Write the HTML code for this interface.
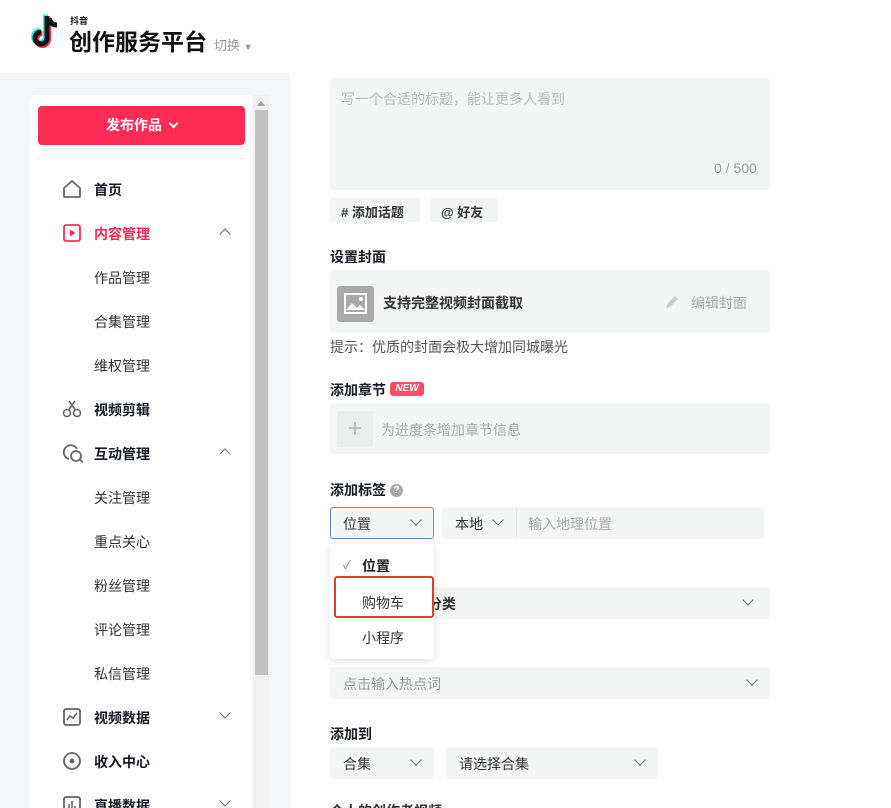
<!DOCTYPE html>
<html style="width:891px;height:808px;overflow:hidden"><head><meta charset="utf-8">
<style>
*{margin:0;padding:0;box-sizing:border-box}
body{width:891px;height:808px;overflow:hidden;background:#f5f6f7;font-family:"Liberation Sans","Noto Sans CJK SC",sans-serif;color:#161823;position:relative;font-size:14px}
.a{position:absolute}
.hdr{left:0;top:0;width:891px;height:73px;background:#fff}
.side{left:30px;top:95px;width:223px;height:713px;background:#fff;border-radius:6px 6px 0 0}
.main{left:290px;top:73px;width:601px;height:735px;background:#fff}
.nav{position:absolute;left:94px;font-size:14px;color:#333}
.nav.b{font-weight:bold;color:#161823}
.ic{position:absolute;left:62px}
.box{position:absolute;background:#f4f5f5;border-radius:4px}
.lbl{position:absolute;left:330px;font-weight:bold;font-size:14px;color:#161823}
.chev{position:absolute;width:8px;height:8px;border-right:1.6px solid #666;border-bottom:1.6px solid #666;transform:rotate(45deg)}
.chevu{position:absolute;width:8px;height:8px;border-left:1.6px solid #666;border-top:1.6px solid #666;transform:rotate(45deg)}
</style></head><body>
<div class="a hdr"></div>
<svg class="a" style="left:30px;top:13px" width="34" height="38" viewBox="0 0 34 38">
<path d="M17 3v22a6 6 0 1 1-6-6" fill="none" stroke="#25f4ee" stroke-width="5" transform="translate(-1.5,-1.5)"/>
<path d="M17 3v22a6 6 0 1 1-6-6" fill="none" stroke="#fe2c55" stroke-width="5" transform="translate(1.5,1.5)"/>
<path d="M17 3v22a6 6 0 1 1-6-6" fill="none" stroke="#111" stroke-width="5"/>
<path d="M19 5c1 5 4 7 8 7" fill="none" stroke="#111" stroke-width="5"/>
</svg>
<div class="a" style="left:70px;top:14px;font-size:9px;font-weight:bold">抖音</div>
<div class="a" style="left:69px;top:23px;font-size:23px;font-weight:bold;color:#111">创作服务平台</div>
<div class="a" style="left:214px;top:35px;font-size:13px;color:#999">切换 <span style="font-size:9px">▼</span></div>

<div class="a side"></div>
<div class="a" style="left:253px;top:95px;width:16px;height:713px;background:#f1f1f1"></div>
<div class="a" style="left:257px;top:101px;width:0;height:0;border-left:4px solid transparent;border-right:4px solid transparent;border-bottom:5px solid #a3a3a3"></div>
<div class="a" style="left:255px;top:110px;width:13px;height:565px;background:#c1c1c1"></div>

<div class="a" style="left:38px;top:106px;width:207px;height:39px;background:#fe2c55;border-radius:4px;color:#fff;font-weight:bold;font-size:14px;text-align:center;line-height:39px">发布作品 <span style="display:inline-block;width:7px;height:7px;border-right:2px solid #fff;border-bottom:2px solid #fff;transform:rotate(45deg);margin-left:4px;position:relative;top:-3px"></span></div>
<div class="a" style="left:38px;top:158px;width:207px;height:1px;background:#eee"></div>

<svg class="ic" style="top:179px" width="20" height="20" viewBox="0 0 20 20"><path d="M2 9L10 2l8 7v9H2z" fill="none" stroke="#666" stroke-width="1.8" stroke-linejoin="round"/></svg>
<div class="nav b" style="top:180px">首页</div>
<svg class="ic" style="top:223px" width="20" height="20" viewBox="0 0 20 20"><rect x="2" y="2" width="16" height="16" rx="2" fill="none" stroke="#fe2c55" stroke-width="1.8"/><path d="M8 6.5v7l5.5-3.5z" fill="#fe2c55"/></svg>
<div class="nav b" style="top:224px;color:#fe2c55">内容管理</div>
<div class="chevu" style="left:221px;top:230px"></div>
<div class="nav" style="top:268px">作品管理</div>
<div class="nav" style="top:312px">合集管理</div>
<div class="nav" style="top:356px">维权管理</div>
<svg class="ic" style="top:399px" width="20" height="20" viewBox="0 0 20 20"><circle cx="5" cy="14" r="3.5" fill="none" stroke="#666" stroke-width="1.6"/><circle cx="15" cy="14" r="3.5" fill="none" stroke="#666" stroke-width="1.6"/><path d="M6.5 11L13 2M13.5 11L7 2" stroke="#666" stroke-width="1.6"/></svg>
<div class="nav b" style="top:400px">视频剪辑</div>
<svg class="ic" style="top:443px" width="22" height="20" viewBox="0 0 22 20"><path d="M7 16a7 7 0 1 1 8-10" fill="none" stroke="#666" stroke-width="1.8"/><circle cx="14" cy="13" r="5" fill="none" stroke="#666" stroke-width="1.8"/><path d="M18 17l3 2" stroke="#666" stroke-width="1.8"/></svg>
<div class="nav b" style="top:444px">互动管理</div>
<div class="chevu" style="left:221px;top:450px"></div>
<div class="nav" style="top:488px">关注管理</div>
<div class="nav" style="top:532px">重点关心</div>
<div class="nav" style="top:576px">粉丝管理</div>
<div class="nav" style="top:620px">评论管理</div>
<div class="nav" style="top:664px">私信管理</div>
<svg class="ic" style="top:707px" width="20" height="20" viewBox="0 0 20 20"><rect x="2" y="2" width="16" height="16" rx="2" fill="none" stroke="#666" stroke-width="1.8"/><path d="M5 13l3-4 3 2 4-5" fill="none" stroke="#666" stroke-width="1.6"/></svg>
<div class="nav b" style="top:708px">视频数据</div>
<div class="chev" style="left:221px;top:709px"></div>
<svg class="ic" style="top:751px" width="20" height="20" viewBox="0 0 20 20"><circle cx="10" cy="10" r="8" fill="none" stroke="#666" stroke-width="1.8"/><circle cx="10" cy="10" r="2.5" fill="#666"/></svg>
<div class="nav b" style="top:752px">收入中心</div>
<svg class="ic" style="top:795px" width="20" height="20" viewBox="0 0 20 20"><rect x="2" y="2" width="16" height="16" rx="2" fill="none" stroke="#666" stroke-width="1.8"/><path d="M7 14V9M10 14V6M13 14v-3" stroke="#666" stroke-width="1.6"/></svg>
<div class="nav b" style="top:796px">直播数据</div>
<div class="chev" style="left:221px;top:797px"></div>

<div class="a main"></div>
<div class="box" style="left:330px;top:78px;width:440px;height:112px"></div>
<div class="a" style="left:341px;top:89px;font-size:14px;color:#bbb">写一个合适的标题，能让更多人看到</div>
<div class="a" style="left:714px;top:160px;font-size:14px;color:#999">0 / 500</div>
<div class="box" style="left:330px;top:198px;width:90px;height:24px;border-radius:2px"></div>
<div class="a" style="left:341px;top:202px;font-size:13px;font-weight:bold;color:#333"># 添加话题</div>
<div class="box" style="left:430px;top:198px;width:68px;height:24px;border-radius:2px"></div>
<div class="a" style="left:441px;top:202px;font-size:13px;font-weight:bold;color:#333">@ 好友</div>

<div class="lbl" style="top:247px">设置封面</div>
<div class="box" style="left:330px;top:270px;width:440px;height:63px"></div>
<div class="a" style="left:337px;top:286px;width:37px;height:36px;background:#a9a9a9;border-radius:3px"></div>
<svg class="a" style="left:344px;top:293px" width="23" height="21" viewBox="0 0 23 21"><rect x="1" y="1" width="21" height="19" fill="none" stroke="#fff" stroke-width="2"/><path d="M2 17l6-7 5 5 3-3 5 5z" fill="#fff"/><circle cx="17" cy="6" r="2" fill="#fff"/></svg>
<div class="a" style="left:383px;top:293px;font-weight:bold;color:#333">支持完整视频封面截取</div>
<svg class="a" style="left:664px;top:294px" width="16" height="16" viewBox="0 0 16 16"><path d="M2 14l1-4 8-8 3 3-8 8z" fill="#ccc"/></svg>
<div class="a" style="left:691px;top:293px;color:#aaa">编辑封面</div>
<div class="a" style="left:330px;top:337px;color:#555">提示：优质的封面会极大增加同城曝光</div>

<div class="lbl" style="top:380px">添加章节</div>
<div class="a" style="left:390px;top:382px;width:34px;height:14px;background:#fe4d64;border-radius:3px;color:#fff;font-size:10px;font-weight:bold;font-style:italic;text-align:center;line-height:14px">NEW</div>
<div class="box" style="left:330px;top:403px;width:440px;height:51px"></div>
<div class="a" style="left:337px;top:411px;width:36px;height:36px;background:#ebecec;border-radius:2px;color:#bbb;font-size:26px;text-align:center;line-height:34px">+</div>
<div class="a" style="left:381px;top:420px;color:#aaa">为进度条增加章节信息</div>

<div class="lbl" style="top:480px">添加标签</div>
<div class="a" style="left:390px;top:484px;width:13px;height:13px;border-radius:50%;background:#aaa;color:#fff;font-size:10px;font-weight:bold;text-align:center;line-height:13px">?</div>
<div class="a" style="left:330px;top:507px;width:104px;height:32px;border:1px solid #6b8cc2;border-radius:3px;background:#f4f5f5"></div>
<div class="a" style="left:343px;top:514px;color:#333">位置</div>
<div class="chev" style="left:412px;top:516px"></div>
<div class="box" style="left:442px;top:507px;width:322px;height:32px"></div>
<div class="a" style="left:455px;top:514px;color:#333">本地</div>
<div class="chev" style="left:494px;top:516px"></div>
<div class="a" style="left:516px;top:508px;width:1px;height:30px;background:#e6e6e6"></div>
<div class="a" style="left:528px;top:514px;color:#aaa">输入地理位置</div>

<div class="box" style="left:330px;top:587px;width:440px;height:32px"></div>
<div class="a" style="left:400px;top:594px;font-weight:bold;color:#333">内容分类</div>
<div class="chev" style="left:744px;top:596px"></div>

<div class="box" style="left:330px;top:667px;width:440px;height:32px"></div>
<div class="a" style="left:343px;top:674px;color:#999">点击输入热点词</div>
<div class="chev" style="left:748px;top:676px"></div>

<div class="a" style="left:330px;top:543px;width:104px;height:116px;background:#fff;border-radius:4px;box-shadow:0 2px 8px rgba(0,0,0,.12)"></div>
<div class="a" style="left:343px;top:556px;color:#888;font-size:12px">✓</div>
<div class="a" style="left:362px;top:556px;font-weight:bold;color:#222">位置</div>
<div class="a" style="left:334px;top:576px;width:100px;height:42px;border:2px solid #e53935;border-radius:3px"></div>
<div class="a" style="left:362px;top:593px;color:#333">购物车</div>
<div class="a" style="left:362px;top:628px;color:#333">小程序</div>

<div class="lbl" style="top:724px">添加到</div>
<div class="box" style="left:330px;top:747px;width:104px;height:32px"></div>
<div class="a" style="left:343px;top:754px;color:#333">合集</div>
<div class="chev" style="left:412px;top:756px"></div>
<div class="box" style="left:446px;top:747px;width:212px;height:32px"></div>
<div class="a" style="left:459px;top:754px;color:#333">请选择合集</div>
<div class="chev" style="left:636px;top:756px"></div>
<div class="lbl" style="top:801px;color:#333">个人的创作者视频</div>
</body></html>
